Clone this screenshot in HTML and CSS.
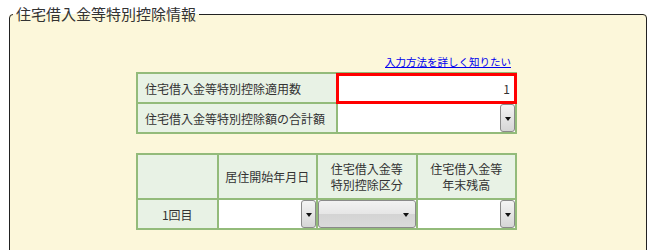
FILE: index.html
```html
<!DOCTYPE html>
<html lang="ja">
<head>
    <meta charset="UTF-8">
    <title>住宅借入金等特別控除情報</title>
    <link rel="stylesheet" href="styles.css">
</head>
<body>
    <fieldset class="panel">
        <legend class="panel-title">住宅借入金等特別控除情報</legend>
        <div class="content">
            <div class="help"><a href="#" class="help-link">入力方法を詳しく知りたい</a></div>

            <table class="grid summary">
                <tr>
                    <th class="label">住宅借入金等特別控除適用数</th>
                    <td class="value"><div class="num-input">1</div></td>
                </tr>
                <tr>
                    <th class="label">住宅借入金等特別控除額の合計額</th>
                    <td class="value"><div class="combo"><span class="combo-btn"></span></div></td>
                </tr>
            </table>

            <table class="grid detail">
                <tr class="head">
                    <th class="c-no"></th>
                    <th class="c-col">居住開始年月日</th>
                    <th class="c-col">住宅借入金等<br>特別控除区分</th>
                    <th class="c-col">住宅借入金等<br>年末残高</th>
                </tr>
                <tr>
                    <th class="c-no">1回目</th>
                    <td class="c-cell"><div class="combo"><span class="combo-btn"></span></div></td>
                    <td class="c-cell"><div class="dropdown"><span class="arrow"></span></div></td>
                    <td class="c-cell"><div class="combo"><span class="combo-btn"></span></div></td>
                </tr>
            </table>
        </div>
    </fieldset>
</body>
</html>
```

FILE: styles.css
```css
* {
    margin: 0;
    padding: 0;
    box-sizing: border-box;
}

html {
    overflow: hidden;
}

body {
    font-family: "Noto Sans CJK JP", "Noto Sans", sans-serif;
    background: #fff;
    color: #333;
    padding: 4px 13px 0 9px;
    height: 250px;
    overflow: hidden;
}

.panel {
    border: 1px solid #222;
    border-radius: 4px;
    background: #fcf7da;
    min-height: 300px;
    padding: 0;
}

.panel-title {
    font-size: 15px;
    line-height: 20px;
    color: #333;
    margin-left: 3px;
    padding: 0 3px 0 3px;
}

.content {
    width: 381px;
    margin: 26px 0 0 126px;
}

.help {
    text-align: right;
    padding-right: 6px;
    padding-top: 5px;
    height: 22px;
    font-size: 10.5px;
    line-height: 14px;
}

.help-link {
    color: #0000ee;
    text-decoration: underline;
}

.grid {
    border-collapse: collapse;
    width: 381px;
    font-size: 12px;
}

.grid th,
.grid td {
    border: 2px solid #93bb7a;
}

.grid th {
    background: #e8f2e5;
    font-weight: normal;
    color: #333;
}

.summary .label {
    width: 200px;
    height: 30px;
    text-align: left;
    padding-left: 7px;
}

.summary .value {
    padding: 0;
    background: #fff;
}

.num-input {
    position: relative;
    z-index: 1;
    height: 31px;
    border: 3px solid #f00;
    margin: -2px;
    text-align: right;
    padding-right: 4px;
    line-height: 25px;
    background: #fff;
}

.combo {
    position: relative;
    height: 28px;
    background: #fff;
}

.combo-btn {
    position: absolute;
    right: 0;
    top: 0;
    width: 15px;
    height: 28px;
    border: 1px solid #8a8a8a;
    border-radius: 3px;
    background: linear-gradient(#f4f4f4, #d6d6d6);
}

.combo-btn::after,
.arrow {
    content: "";
    position: absolute;
    left: 4px;
    top: 12px;
    border-left: 3px solid transparent;
    border-right: 3px solid transparent;
    border-top: 4px solid #111;
}

.detail {
    margin-top: 19px;
}

.detail .head th {
    height: 45px;
    line-height: 16px;
    text-align: center;
}

.detail .c-no {
    width: 81px;
    text-align: center;
    height: 30px;
}

.detail .c-col {
    width: 100px;
}

.detail .c-cell {
    padding: 0;
    background: #fff;
}

.dropdown {
    position: relative;
    height: 28px;
    border: 1px solid #8a8a8a;
    border-radius: 3px;
    background: linear-gradient(#f2f2f2 0%, #e6e6e6 50%, #d4d4d4 51%, #dadada 100%);
}

.dropdown .arrow {
    left: auto;
    right: 6px;
}
```
